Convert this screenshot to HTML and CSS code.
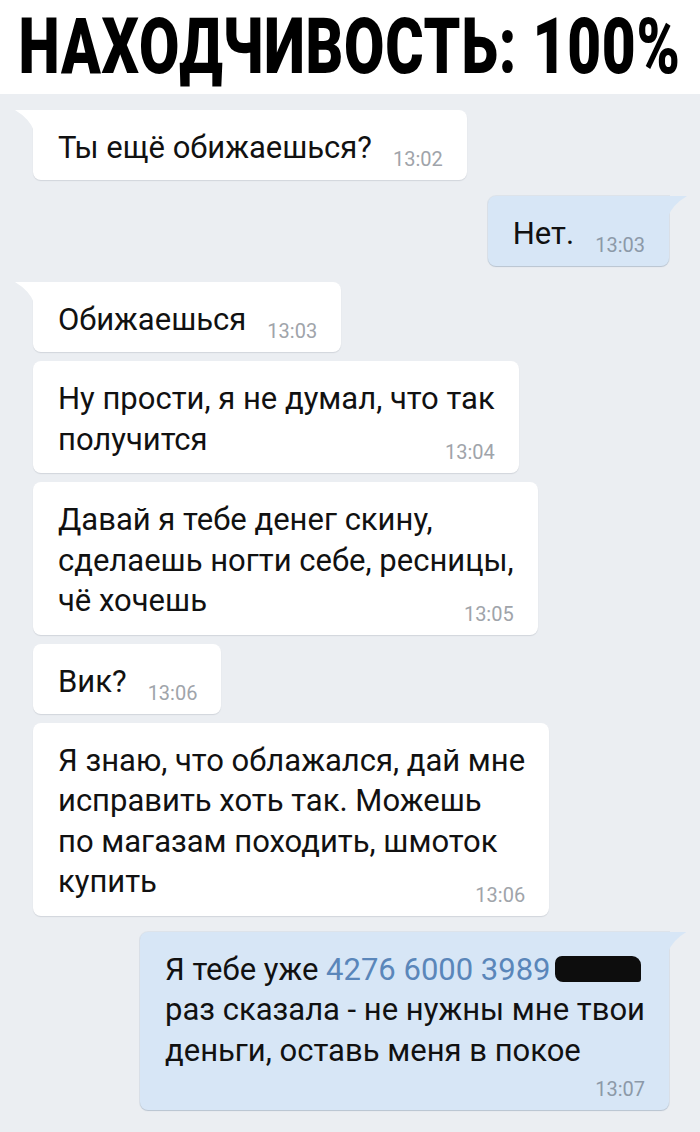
FILE: index.html
```html
<!DOCTYPE html>
<html>
    <head>
        <meta charset="utf-8">
        <meta name="viewport" content="width=device-width,initial-scale=1.0">
        <title>Находчивость: 100%</title>
        <link rel="stylesheet" href="styles.css">
    </head>
    <body>
        <header class="title">
            <span class="title-text">НАХОДЧИВОСТЬ: 100%</span>
        </header>

        <main class="chat">
            <div class="group in">
                <div class="msg first">
                    <span class="msg-text">Ты ещё обижаешься?</span><span class="msg-time">13:02</span>
                </div>
            </div>

            <div class="group out">
                <div class="msg first">
                    <span class="msg-text">Нет.</span><span class="msg-time">13:03</span>
                </div>
            </div>

            <div class="group in">
                <div class="msg first">
                    <span class="msg-text">Обижаешься</span><span class="msg-time">13:03</span>
                </div>
                <div class="msg multi">
                    <p class="msg-text">Ну прости, я не думал, что так<br>получится</p>
                    <span class="msg-time">13:04</span>
                </div>
                <div class="msg multi">
                    <p class="msg-text">Давай я тебе денег скину,<br>сделаешь ногти себе, ресницы,<br>чё хочешь</p>
                    <span class="msg-time">13:05</span>
                </div>
                <div class="msg">
                    <span class="msg-text">Вик?</span><span class="msg-time">13:06</span>
                </div>
                <div class="msg multi">
                    <p class="msg-text">Я знаю, что облажался, дай мне<br>исправить хоть так. Можешь<br>по магазам походить, шмоток<br>купить</p>
                    <span class="msg-time">13:06</span>
                </div>
            </div>

            <div class="group out">
                <div class="msg first multi own-line">
                    <p class="msg-text">Я тебе уже <span class="card">4276 6000 3989</span><span class="redacted"></span><br>раз сказала - не нужны мне твои<br>деньги, оставь меня в покое</p>
                    <span class="msg-time">13:07</span>
                </div>
            </div>
        </main>
    </body>
</html>
```

FILE: styles.css
```css
html, body {
    margin: 0;
    padding: 0;
    background-color: #ebeef2;
    font-family: "Roboto", "Noto Sans", sans-serif;
    color: #111;
}

.title {
    display: flex;
    justify-content: center;
    height: 94px;
    background-color: #fff;
    overflow: hidden;
}

.title-text {
    flex: none;
    font-family: "Roboto", sans-serif;
    font-size: 77px;
    font-weight: 900;
    line-height: 94px;
    letter-spacing: 1px;
    color: #000;
    white-space: nowrap;
    transform: scaleX(0.76);
}

.chat {
    display: flex;
    flex-direction: column;
    gap: 16px;
    padding: 16px 31px 20px 33px;
}

.group {
    display: flex;
    flex-direction: column;
    gap: 9px;
}

.group.in {
    align-items: flex-start;
}

.group.out {
    align-items: flex-end;
}

.msg {
    position: relative;
    box-sizing: border-box;
    padding: 18px 24px 11px 25px;
    border-radius: 8px;
    background-color: #fff;
    box-shadow: 0 1px 1px rgba(40, 50, 70, 0.13);
    font-size: 31px;
    line-height: 40.5px;
    white-space: nowrap;
}

.out .msg {
    background-color: #d7e6f6;
    box-shadow: 0 1px 1px rgba(60, 85, 120, 0.22), 0 0 0 1px rgba(120, 150, 185, 0.12);
}

.msg-text {
    margin: 0;
}

.msg-time {
    display: inline-block;
    margin-left: 21px;
    font-size: 20px;
    line-height: 20px;
    vertical-align: -8px;
    color: #a0a4aa;
}

.out .msg-time {
    color: #8c99a8;
}

.msg.multi .msg-time {
    display: block;
    margin: -18px 0 0 0;
    text-align: right;
}

.msg.own-line .msg-time {
    margin-top: 8px;
}

/* tails on the first bubble of a group */
.in .msg.first {
    border-top-left-radius: 0;
}

.out .msg.first {
    border-top-right-radius: 0;
}

.msg.first::before {
    content: "";
    position: absolute;
    top: 0;
    width: 19px;
    height: 21px;
    background-color: inherit;
}

.in .msg.first::before {
    left: -18px;
    clip-path: path("M0 0 H19 V21 Q15 9 0 0 Z");
}

.out .msg.first::before {
    right: -18px;
    clip-path: path("M0 0 H19 Q4 9 0 21 Z");
}

.card {
    color: #5a86ba;
}

.redacted {
    display: inline-block;
    width: 86px;
    height: 26px;
    margin-left: 4px;
    vertical-align: -2px;
    background-color: #0d0d0d;
    border-radius: 7px 9px 3px 8px;
}
```
